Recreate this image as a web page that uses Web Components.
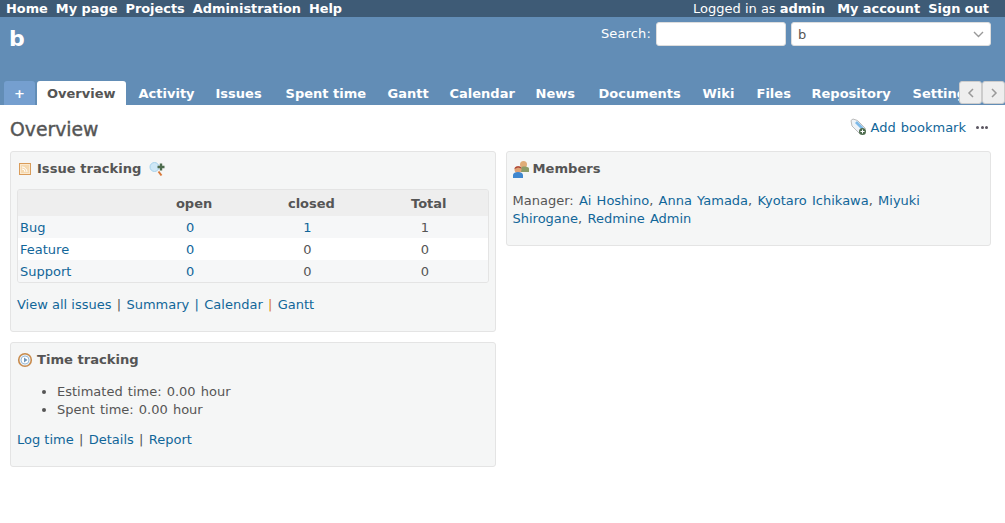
<!DOCTYPE html>
<html lang="en">
<head>
<meta charset="utf-8">
<title>Overview</title>
<style>
  html, body { margin: 0; padding: 0; height: 100%; background: #fff; overflow: hidden; }
  body { font-family: "DejaVu Sans", Verdana, sans-serif; font-size: 13px; color: #555; }
</style>
</head>
<body>
<rm-topmenu></rm-topmenu>
<rm-header></rm-header>
<rm-main></rm-main>

<script>
(function () {
    const font = `"DejaVu Sans", Verdana, sans-serif`;

    class RmTopmenu extends HTMLElement {
        constructor() {
            super();
            this.attachShadow({ mode: "open" }).innerHTML = `
              <style>
                :host { display: flex; justify-content: space-between; height: 17px; padding: 0 16px 0 6px;
                        background: #3e5b76; color: #fff; font: bold 12.9px/17px ${font}; }
                nav { display: flex; gap: 8px; }
                .login { font-weight: normal; margin-right: 4px; font-size: 13px; }
                b { font-weight: bold; }
              </style>
              <nav><span>Home</span><span>My page</span><span>Projects</span><span>Administration</span><span>Help</span></nav>
              <nav><span class="login">Logged in as <b>admin</b></span><span>My account</span><span>Sign out</span></nav>
            `;
        }
    }
    customElements.define("rm-topmenu", RmTopmenu);

    class RmTabs extends HTMLElement {
        constructor() {
            super();
            // tab widths read off the reference, DejaVu runs a bit different from the original font
            let tabs = [["Activity", 77], ["Issues", 70], ["Spent time", 102], ["Gantt", 62], ["Calendar", 86],
                ["News", 63], ["Documents", 104], ["Wiki", 54], ["Files", 55], ["Repository", 101], ["Settings", 100]];
            this.attachShadow({ mode: "open" }).innerHTML = `
              <style>
                :host { display: flex; height: 24px; padding-left: 4px; position: relative; overflow: hidden;
                        font: bold 13px/26px ${font}; color: #fff; }
                span { flex: none; box-sizing: border-box; padding-left: 11px; }
                .new { width: 31px; margin-right: 2px; padding: 0; text-align: center;
                       background: #759fcf; border-radius: 3px 3px 0 0; }
                .on { background: #fff; color: #555; padding: 0 10px; margin-right: 2px; border-radius: 3px 3px 0 0; }
                .nav { position: absolute; top: 0; right: 0; display: flex; }
                .nav div { width: 23px; height: 23px; box-sizing: border-box; background: #eee; border: 1px solid #ccc;
                           border-radius: 3px; display: flex; align-items: center; justify-content: center; }
              </style>
              <span class="new">+</span><span class="on">Overview</span>
              ${tabs.map(t => `<span style="width:${t[1]}px">${t[0]}</span>`).join("")}
              <div class="nav">
                <div><svg width="8" height="10" viewBox="0 0 8 10"><path d="M6 1L2 5l4 4" fill="none" stroke="#999" stroke-width="1.5"/></svg></div>
                <div><svg width="8" height="10" viewBox="0 0 8 10"><path d="M2 1l4 4-4 4" fill="none" stroke="#999" stroke-width="1.5"/></svg></div>
              </div>
            `;
        }
    }
    customElements.define("rm-tabs", RmTabs);

    class RmHeader extends HTMLElement {
        constructor() {
            super();
            this.attachShadow({ mode: "open" }).innerHTML = `
              <style>
                :host { display: block; height: 88px; background: #628db6; color: #fff; font: 13px ${font}; }
                .top { display: flex; justify-content: space-between; height: 64px; padding: 5px 14px 0 9px; box-sizing: border-box; }
                h1 { margin: 2px 0 0; font: bold 22px/29px ${font}; }
                .search { display: flex; gap: 5px; height: 24px; line-height: 23px; }
                .search > span { letter-spacing: .15px; }
                .field { background: #fff; border: 1px solid #ddd; border-radius: 3px; box-sizing: border-box; height: 24px; }
                .q { width: 130px; }
                .jump { width: 200px; display: flex; align-items: center; justify-content: space-between;
                        padding: 0 6px 0 6px; color: #555; }
              </style>
              <div class="top">
                <h1>b</h1>
                <div class="search">
                  <span>Search:</span><div class="field q"></div>
                  <div class="field jump"><span>b</span>
                    <svg width="11" height="7" viewBox="0 0 11 7"><path d="M1 1l4.500 4.500L10 1" fill="none" stroke="#999" stroke-width="1.4"/></svg>
                  </div>
                </div>
              </div>
              <rm-tabs></rm-tabs>
            `;
        }
    }
    customElements.define("rm-header", RmHeader);

    class RmBox extends HTMLElement {
        constructor() {
            super();
            this.attachShadow({ mode: "open" }).innerHTML = `
              <style>
                :host { display: block; box-sizing: border-box; padding: 6px; background: #f5f6f6;
                        border: 1px solid #e4e4e4; border-radius: 3px; color: #555; }
                h3 { display: flex; align-items: center; margin: 0; height: 22px; font: bold 13.100px/22px ${font}; color: #555; }
                ::slotted([slot=icon]) { flex: none; }
              </style>
              <h3><slot name="icon"></slot><span id="title"></span><slot name="after"></slot></h3>
              <slot></slot>
            `;
        }
        connectedCallback() {
            this.shadowRoot.getElementById("title").textContent = this.getAttribute("heading");
        }
    }
    customElements.define("rm-box", RmBox);

    class RmIssueTable extends HTMLElement {
        constructor() {
            super();
            let rows = [["Bug", 0, 1, 1], ["Feature", 0, 0, 0], ["Support", 0, 0, 0]];
            this.attachShadow({ mode: "open" }).innerHTML = `
              <style>
                :host { display: block; margin-top: 9px; border: 1px solid #e4e4e4; border-radius: 3px; overflow: hidden; font: 13px ${font}; }
                table { width: 100%; border-collapse: collapse; table-layout: fixed; }
                th { height: 26px; padding: 0; background: #eee; color: #555; font-weight: bold; text-align: center; }
                td { height: 22px; padding: 0 8px 0 0; text-align: center; color: #555; }
                td:first-child { padding: 0 0 0 2px; text-align: left; }
                tr:nth-child(odd) td { background: #f6f7f8; }
                tr:nth-child(even) td { background: #fff; }
                td.l { color: #169; }
              </style>
              <table>
                <thead><tr><th></th><th>open</th><th>closed</th><th>Total</th></tr></thead>
                <tbody>
                ${rows.map(r => `<tr><td class="l">${r[0]}</td><td class="l">${r[1]}</td><td class="${r[2] ? "l" : ""}">${r[2]}</td><td>${r[3]}</td></tr>`).join("")}
                </tbody>
              </table>
            `;
        }
    }
    customElements.define("rm-issue-table", RmIssueTable);

    class RmMain extends HTMLElement {
        constructor() {
            super();
            const tag = `<svg width="19" height="18" viewBox="0 0 19 18"><path d="M1 2.500L3 1l4.500 1.500 8 8-5.500 5.500-8-8z" fill="#eef3f8" stroke="#bbb"/><path d="M5 5l6.500 6.500 2-2-6.500-6.500z" fill="#7db9e8"/><circle cx="12.500" cy="13.500" r="3.500" fill="#4d6b4d"/><path d="M12.500 11.500v4M10.500 13.500h4" stroke="#fff"/></svg>`;
            const feed = `<svg slot="icon" width="16" height="16" viewBox="0 0 16 16" style="margin-right:4px"><rect x="2.500" y="2.500" width="11" height="11" fill="#fbe9cf" stroke="#d99c5a"/><rect x="4" y="4" width="8" height="8" fill="#f5d9b0"/><path d="M5 8a3 3 0 0 1 3 3M5 6a5 5 0 0 1 5 5" fill="none" stroke="#fff"/></svg>`;
            const zoom = `<svg slot="after" width="16" height="16" viewBox="0 0 16 16" style="margin-left:8px"><circle cx="5.500" cy="6" r="4.500" fill="#cfe8f7" stroke="#a9d3ec"/><path d="M9.500 10.500l3 4" stroke="#d9793a" stroke-width="2"/><path d="M12 2.500v7M8.500 6h7" stroke="#4d6b4d" stroke-width="2.400"/></svg>`;
            const clock = `<svg slot="icon" width="16" height="16" viewBox="0 0 16 16" style="margin-right:4px"><circle cx="8" cy="8" r="6.300" fill="#e6f0f8" stroke="#c98b4c" stroke-width="1.600"/><circle cx="8" cy="8" r="4" fill="#fff" stroke="#9dbcd8"/><path d="M7 5.500v5l3.500-2.500z" fill="#6d94b8"/></svg>`;
            const people = `<svg slot="icon" width="16" height="17" viewBox="0 0 16 17" style="margin-right:4px"><circle cx="10.500" cy="3.500" r="3.500" fill="#e0ac78"/><path d="M8 11V7.500C8 6 9.500 5.500 11 5.500s5 .5 5 2V11z" fill="#8c9c68"/><circle cx="5" cy="8.500" r="3.500" fill="#e0a274"/><path d="M1.500 8C1.500 4.500 8.500 4.500 8.500 7.500L5 6.500z" fill="#a8433a"/><path d="M0 17v-3C0 12 2.500 11 5 11s5 1 5 3v3z" fill="#3f87cf"/></svg>`;
            this.attachShadow({ mode: "open" }).innerHTML = `
              <style>
                :host { display: block; padding: 10px 14px 0 10px; font: 13px ${font}; color: #555; }
                a { color: #169; text-decoration: none; }
                .title { display: flex; justify-content: space-between; height: 36px; }
                h2 { margin: 1px 0 0; font: normal 18.800px/28px ${font}; -webkit-text-stroke: .4px #555; color: #555; }
                .ctx { display: flex; align-items: center; height: 24px; gap: 2px; }
                .ctx a { margin-right: 8px; word-spacing: 1px; }
                .dots { display: flex; gap: 1.500px; margin-right: 3px; }
                .dots i { width: 3px; height: 3px; background: #5a5560; border-radius: 50%; }
                .split { display: flex; gap: 10px; align-items: flex-start; }
                .col { flex: 1 1 0; min-width: 0; display: flex; flex-direction: column; gap: 10px; }
                .issues { height: 181px; }
                .time { height: 125px; }
                .members { height: 95px; }
                .links { display: flex; gap: 5.300px; margin-top: 13px; line-height: 18px; white-space: nowrap; }
                .time .links { margin-top: 12px; }
                .members p { margin: 12px 0 0; line-height: 18px; word-spacing: 1.100px; }
                ul { margin: 12px 0 0; padding-left: 40px; line-height: 18px; word-spacing: 1px; }
                .orange { color: #d97f1f; }
                .blue { color: #169; }
              </style>
              <div class="title">
                <h2>Overview</h2>
                <div class="ctx">${tag}<a href="#">Add bookmark</a><span class="dots"><i></i><i></i><i></i></span></div>
              </div>
              <div class="split">
                <div class="col">
                  <rm-box class="issues" heading="Issue tracking">
                    ${feed}${zoom}
                    <rm-issue-table></rm-issue-table>
                    <div class="links"><a href="#">View all issues</a><span>|</span><a href="#">Summary</a><span class="blue">|</span><a href="#">Calendar</a><span class="orange">|</span><a href="#">Gantt</a></div>
                  </rm-box>
                  <rm-box class="time" heading="Time tracking">
                    ${clock}
                    <ul><li>Estimated time: 0.00 hour</li><li>Spent time: 0.00 hour</li></ul>
                    <div class="links"><a href="#">Log time</a><span>|</span><a href="#">Details</a><span>|</span><a href="#">Report</a></div>
                  </rm-box>
                </div>
                <div class="col">
                  <rm-box class="members" heading="Members">
                    ${people}
                    <p>Manager: <a href="#">Ai Hoshino</a>, <a href="#">Anna Yamada</a>, <a href="#">Kyotaro Ichikawa</a>, <a href="#">Miyuki</a> <a href="#">Shirogane</a>, <a href="#">Redmine Admin</a></p>
                  </rm-box>
                </div>
              </div>
            `;
        }
    }
    customElements.define("rm-main", RmMain);
})();
</script>
</body>
</html>
